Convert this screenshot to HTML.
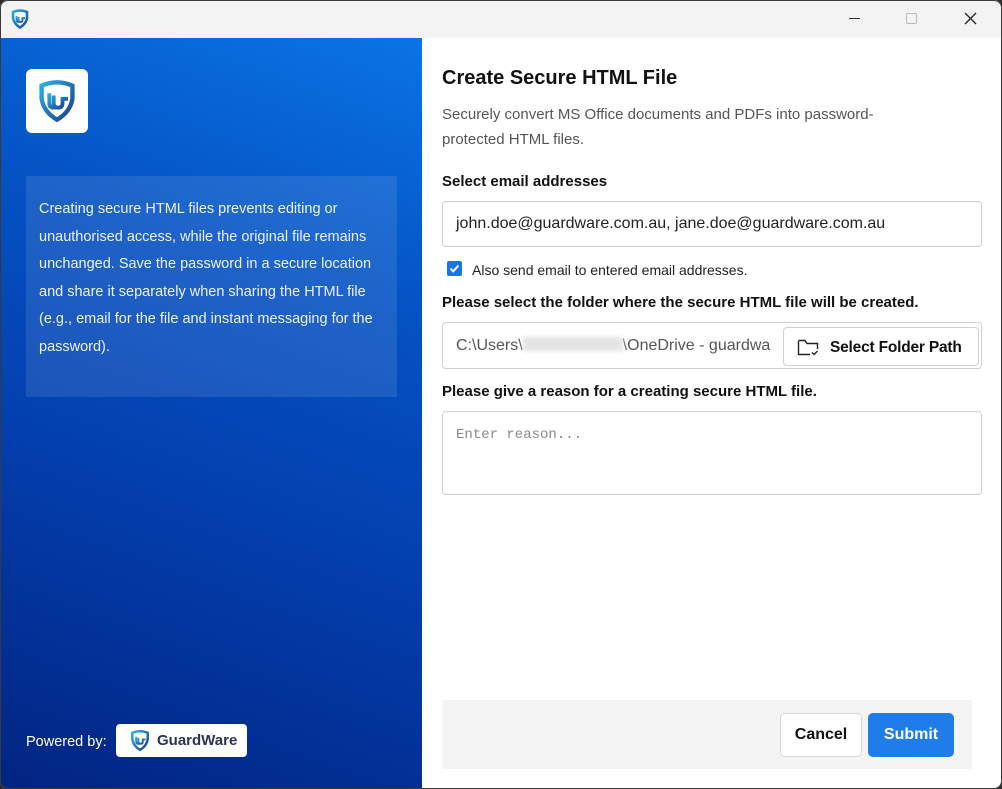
<!DOCTYPE html>
<html><head><meta charset="utf-8"><style>
*{box-sizing:border-box;margin:0;padding:0}
body{width:1002px;height:789px;background:#2a2a2a;font-family:"Liberation Sans",sans-serif;overflow:hidden;position:relative}
.win{position:absolute;left:0;top:0;width:1002px;height:789px;border-radius:8px;overflow:hidden;background:#fff}
.frame{position:absolute;left:0;top:0;width:1002px;height:789px;border:1px solid #3a3a3a;border-radius:8px}
.tb{position:absolute;left:0;top:0;width:1002px;height:38px;background:#f3f3f3}
.left{position:absolute;left:0;top:38px;width:422px;height:751px;background:linear-gradient(200deg,#0a74e4 0%,#0553c4 30%,#033fae 60%,#022482 100%)}
.abs{position:absolute}
.box{left:26px;top:138px;width:371px;height:221px;background:rgba(255,255,255,0.1);color:#eef3ff;font-size:14.5px;line-height:27.5px;padding:20px 10px 0 13px}
.lbl{position:absolute;left:442px;font-size:15px;font-weight:bold;color:#111}
.inp{position:absolute;left:442px;width:540px;border:1px solid #d0d0d0;border-radius:4px;background:#fff}
</style></head><body>
<div class="win">
<div class="tb">
<svg class="abs" style="left:10px;top:9px" width="20" height="20" viewBox="0 0 40 40"><defs><linearGradient id="g0" x1="0" y1="0" x2="1" y2="1"><stop offset="0" stop-color="#29a9e0"/><stop offset="1" stop-color="#1a4a9a"/></linearGradient></defs><path d="M6 6 Q20 0 34 6 L34 18 Q32 30 20 37 Q8 30 6 18 Z" fill="none" stroke="url(#g0)" stroke-width="5"/><path d="M13 14 L13 22 Q13 26 17 26 L17 16 M17 22 Q17 26 21 26 Q25 26 25 22 L25 18 L30 18" fill="none" stroke="url(#g0)" stroke-width="3.5"/></svg>
<div class="abs" style="left:849px;top:18px;width:11px;height:1px;background:#333"></div>
<div class="abs" style="left:906px;top:13px;width:11px;height:11px;border:1px solid #bbb;border-radius:2px"></div>
<svg class="abs" style="left:964px;top:12px" width="13" height="13"><path d="M1 1L12 12M12 1L1 12" stroke="#222" stroke-width="1.3"/></svg>
</div>
<div class="left">
<div class="abs" style="left:26px;top:31px;width:62px;height:64px;background:#fff;border-radius:6px">
<svg class="abs" style="left:9px;top:9px" width="44" height="46" viewBox="0 0 40 40"><defs><linearGradient id="g1" x1="0" y1="0" x2="1" y2="1"><stop offset="0" stop-color="#29b0e4"/><stop offset="1" stop-color="#1a3e90"/></linearGradient></defs><path d="M6 6 Q20 0 34 6 L34 18 Q32 30 20 37 Q8 30 6 18 Z" fill="none" stroke="url(#g1)" stroke-width="4"/><path d="M13 13 L13 22 Q13 26 17 26 L17 15 M17 22 Q17 26 21 26 Q25 26 25 22 L25 18 L30 18" fill="none" stroke="url(#g1)" stroke-width="3.5"/></svg>
</div>
<div class="abs box">Creating secure HTML files prevents editing or unauthorised access, while the original file remains unchanged. Save the password in a secure location and share it separately when sharing the HTML file (e.g., email for the file and instant messaging for the password).</div>
<div class="abs" style="left:26px;top:696px;color:#fff;font-size:14.5px">Powered by:</div>
<div class="abs" style="left:116px;top:686px;width:131px;height:33px;background:#fff;border-radius:4px">
<svg class="abs" style="left:13px;top:5px" width="22" height="23" viewBox="0 0 40 40"><path d="M6 6 Q20 0 34 6 L34 18 Q32 30 20 37 Q8 30 6 18 Z" fill="none" stroke="url(#g1)" stroke-width="4.5"/><path d="M13 13 L13 22 Q13 26 17 26 L17 15 M17 22 Q17 26 21 26 Q25 26 25 22 L25 18 L30 18" fill="none" stroke="url(#g1)" stroke-width="3.5"/></svg>
<div class="abs" style="left:41px;top:8px;font-size:15px;font-weight:bold;color:#2b3550">GuardWare</div>
</div>
</div>
<div class="abs" style="left:442px;top:67px;font-size:20px;font-weight:bold;color:#111">Create Secure HTML File</div>
<div class="abs" style="left:442px;top:102px;width:470px;font-size:15px;line-height:25px;color:#555">Securely convert MS Office documents and PDFs into password-protected HTML files.</div>
<div class="lbl" style="top:173px">Select email addresses</div>
<div class="inp" style="top:201px;height:46px;font-size:16px;color:#222;padding:13px 0 0 13px">john.doe@guardware.com.au, jane.doe@guardware.com.au</div>
<div class="abs" style="left:447px;top:261px;width:15px;height:15px;background:#1a73e8;border-radius:2px"><svg width="15" height="15"><path d="M3.5 7.5L6.3 10.3L11.5 4.5" stroke="#fff" stroke-width="2" fill="none"/></svg></div>
<div class="abs" style="left:472px;top:262px;font-size:14px;color:#222">Also send email to entered email addresses.</div>
<div class="lbl" style="top:294px">Please select the folder where the secure HTML file will be created.</div>
<div class="inp" style="top:322px;height:47px;font-size:16px;color:#555;padding:14px 0 0 13px">C:\Users\<span style="display:inline-block;width:100px;height:14px;background:#e4e4e4;vertical-align:-1px;filter:blur(2px)"></span>\OneDrive - guardwa</div>
<div class="abs" style="left:783px;top:327px;width:196px;height:39px;background:#fff;border:1px solid #d0d0d0;border-radius:4px">
<svg class="abs" style="left:13px;top:10px" width="22" height="19" viewBox="0 0 22 19"><path d="M1.5 3V16.5H13M20.5 11V5.5H10L8 2.5H1.5" fill="none" stroke="#222" stroke-width="1.4"/><path d="M15 14.5L17 16.5L20.5 13" fill="none" stroke="#222" stroke-width="1.4"/></svg>
<div class="abs" style="left:46px;top:11px;font-size:15.5px;font-weight:bold;color:#111;letter-spacing:-0.2px">Select Folder Path</div>
</div>
<div class="lbl" style="top:383px">Please give a reason for a creating secure HTML file.</div>
<div class="inp" style="top:411px;height:84px;font-family:'Liberation Mono',monospace;font-size:14px;color:#888;padding:15px 0 0 13px">Enter reason...</div>
<div class="abs" style="left:442px;top:700px;width:530px;height:69px;background:#f4f4f4"></div>
<div class="abs" style="left:780px;top:713px;width:82px;height:44px;background:#fff;border:1px solid #d6d6d6;border-radius:5px;font-size:16px;font-weight:bold;color:#111;text-align:center;line-height:42px">Cancel</div>
<div class="abs" style="left:868px;top:713px;width:86px;height:44px;background:#1e7de8;border-radius:5px;font-size:16px;font-weight:bold;color:#fff;text-align:center;line-height:44px">Submit</div>
</div>
<div class="frame"></div>
</body></html>
